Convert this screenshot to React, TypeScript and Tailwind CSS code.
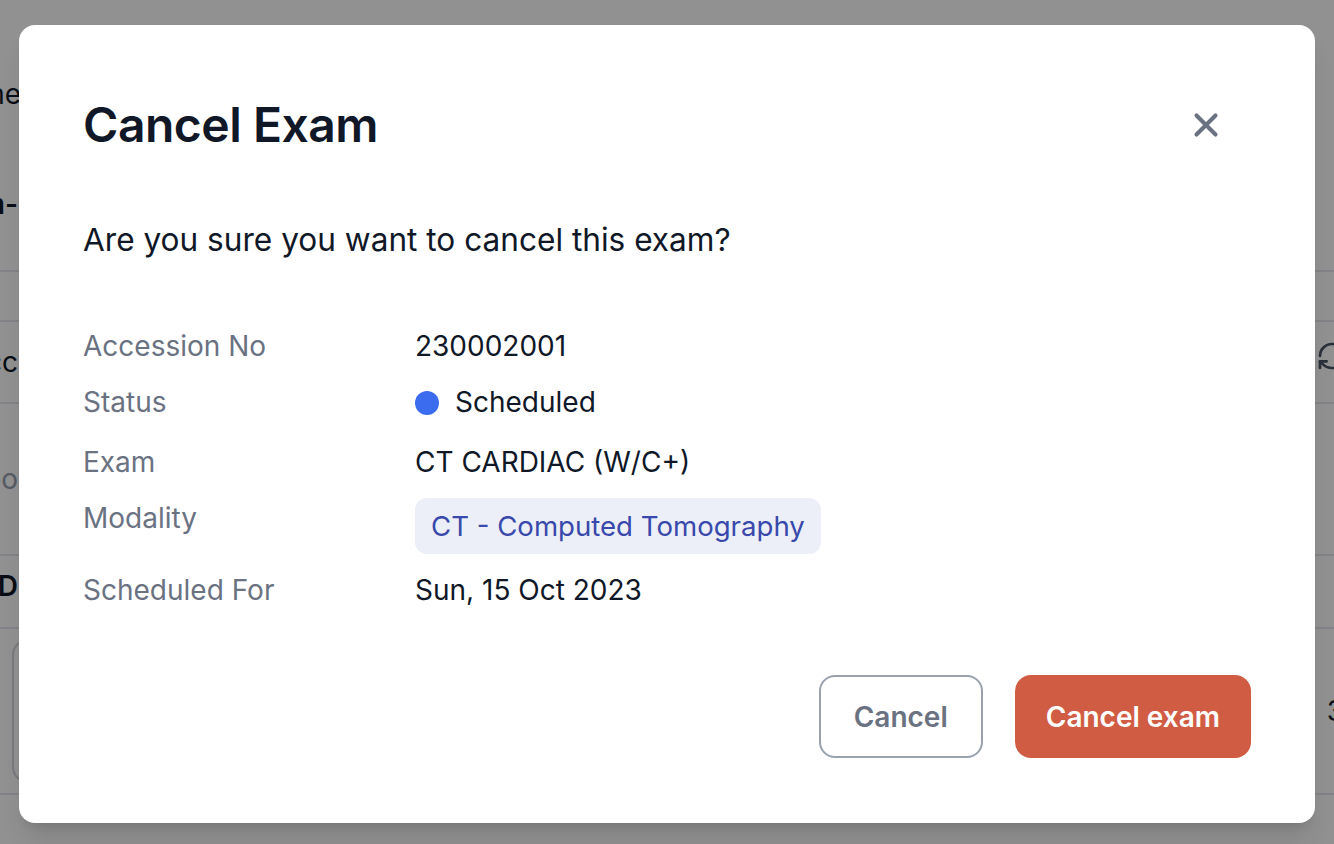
import React from 'react';
import { X, RefreshCw } from 'lucide-react';

const details = [
  { label: 'Accession No', value: '230002001' },
  { label: 'Status', value: 'Scheduled' },
  { label: 'Exam', value: 'CT CARDIAC (W/C+)' },
  { label: 'Modality', value: 'CT - Computed Tomography' },
  { label: 'Scheduled For', value: 'Sun, 15 Oct 2023' },
];

const Backdrop: React.FC = () => (
  <div className="flex h-full w-full flex-col text-[28px] text-gray-900">
    <div className="flex h-[270px] flex-col">
      <div className="mt-[74px] flex h-[40px] w-[21px] items-center justify-end overflow-hidden whitespace-nowrap">
        <span>Scheme</span>
      </div>
      <div className="mt-[70px] flex h-[40px] w-[18px] items-center justify-end overflow-hidden whitespace-nowrap font-semibold">
        <span>Exam-</span>
      </div>
    </div>
    <div className="h-[50px] border-t-2 border-gray-200" />
    <div className="flex h-[82px] items-center justify-between border-t-2 border-gray-200">
      <div className="flex w-[18px] justify-end overflow-hidden whitespace-nowrap">
        <span>Acc</span>
      </div>
      <RefreshCw className="mb-3 mr-[-14px] h-8 w-8 text-gray-600" />
    </div>
    <div className="flex h-[152px] items-center border-t-2 border-gray-200">
      <div className="flex w-[18px] justify-end overflow-hidden whitespace-nowrap text-gray-400">
        <span>Too</span>
      </div>
    </div>
    <div className="flex h-[73px] items-center border-t-2 border-gray-200">
      <div className="mb-3 flex w-[18px] justify-end overflow-hidden whitespace-nowrap font-semibold">
        <span>D</span>
      </div>
    </div>
    <div className="flex h-[166px] items-center justify-between border-t-2 border-gray-200 pl-3">
      <div className="h-[144px] w-[60px] rounded-2xl border-2 border-gray-300" />
      <span className="mr-[-10px]">3</span>
    </div>
    <div className="border-t-2 border-gray-200" />
  </div>
);

export default function App() {
  return (
    <div className="relative h-[844px] w-full overflow-hidden bg-white font-['Inter',sans-serif]">
      <Backdrop />
      <div className="absolute inset-0 flex items-start justify-center bg-black/[0.43] pt-[25px]">
        <div className="flex h-[798px] w-[1296px] flex-col rounded-[16px] bg-white px-[64px] pb-[65px] pt-[68px] shadow-xl">
          <div className="flex items-center justify-between">
            <h2 className="text-[48px] font-semibold leading-[64px] tracking-[-0.01em] text-gray-900">
              Cancel Exam
            </h2>
            <button className="mr-[21px] flex h-12 w-12 items-center justify-center text-gray-500">
              <X className="h-[38px] w-[38px]" strokeWidth={2.6} />
            </button>
          </div>

          <p className="mt-[59px] text-[31.6px] leading-[48px] text-gray-900">
            Are you sure you want to cancel this exam?
          </p>

          <div className="mt-[62px] grid grid-cols-[332px_1fr] gap-y-4 text-[28px] leading-[40px]">
            <div className="text-gray-500">{details[0].label}</div>
            <div className="text-gray-900">{details[0].value}</div>

            <div className="h-[44px] text-gray-500">{details[1].label}</div>
            <div className="flex h-[44px] items-start gap-4 text-gray-900">
              <span className="mt-[9px] h-6 w-6 rounded-full bg-[#3b6cf0]" />
              <span>{details[1].value}</span>
            </div>

            <div className="text-gray-500">{details[2].label}</div>
            <div className="text-gray-900">{details[2].value}</div>

            <div className="text-gray-500">{details[3].label}</div>
            <div className="flex">
              <span className="rounded-xl bg-[#eceef8] px-4 py-2 text-[27.6px] text-[#3949ab]">
                {details[3].value}
              </span>
            </div>

            <div className="text-gray-500">{details[4].label}</div>
            <div className="text-gray-900">{details[4].value}</div>
          </div>

          <div className="mt-auto flex justify-end gap-8">
            <button className="h-[83px] rounded-2xl border-2 border-gray-400 bg-white px-[33px] text-[28px] font-semibold text-gray-500">
              Cancel
            </button>
            <button className="h-[83px] rounded-2xl bg-[#d05c44] px-[31px] text-[28px] font-semibold text-white">
              Cancel exam
            </button>
          </div>
        </div>
      </div>
    </div>
  );
}
